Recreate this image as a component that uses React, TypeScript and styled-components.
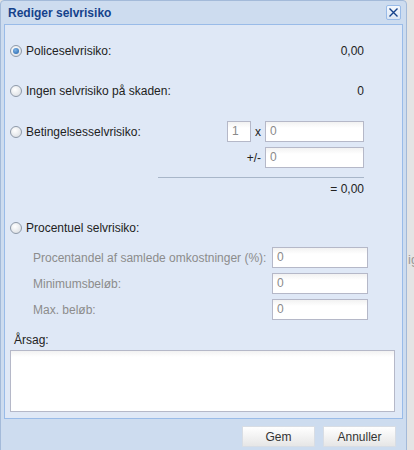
import React from "react";
import styled, { createGlobalStyle } from "styled-components";

const Global = createGlobalStyle`
  html, body { margin: 0; padding: 0; background: #ececec; }
  * { box-sizing: border-box; }
`;

const Page = styled.div`
  width: 414px;
  height: 450px;
  overflow: hidden;
  display: flex;
  font-family: "Liberation Sans", Arial, sans-serif;
  font-size: 12px;
  color: #222;
  background: #e4e4e4;
`;

const Win = styled.div`
  width: 407px;
  height: 470px;
  flex: none;
  background: #cddcef;
  border: 1px solid #a3bad9;
  border-radius: 4px 4px 0 0;
  padding: 0 3px;
  display: flex;
  flex-direction: column;
`;

const Header = styled.div`
  height: 23px;
  display: flex;
  align-items: center;
  justify-content: space-between;
  padding: 0 2px 0 4px;
`;

const Title = styled.div`
  font-weight: bold;
  color: #15428b;
  font-size: 12px;
`;

const Close = styled.div`
  width: 15px;
  height: 15px;
  border: 1px solid #99bbe8;
  border-radius: 2px;
  background: linear-gradient(#f4f8fd, #dbe6f4);
  display: flex;
  align-items: center;
  justify-content: center;
`;

const Body = styled.div`
  background: #dfe8f6;
  border: 1px solid #99bbe8;
  height: 395px;
  padding: 0 7px 0 5px;
  display: flex;
  flex-direction: column;
`;

const Row = styled.div<{ $top: number; $h?: number }>`
  margin-top: ${(p) => p.$top}px;
  height: ${(p) => p.$h ?? 20}px;
  display: flex;
  align-items: center;
`;

const RadioLabel = styled.label`
  display: flex;
  align-items: center;
  gap: 4px;
  flex: 1;
`;

const Radio = styled.span<{ $on?: boolean }>`
  width: 12px;
  height: 12px;
  border-radius: 50%;
  border: 1px solid #8e99a8;
  background: radial-gradient(circle at 40% 35%, #ffffff, #d5d9de);
  display: flex;
  align-items: center;
  justify-content: center;
  &::after {
    content: "";
    display: ${(p) => (p.$on ? "block" : "none")};
    width: 6px;
    height: 6px;
    border-radius: 50%;
    background: radial-gradient(circle at 40% 35%, #7db3e6, #1f5fa8);
  }
`;

const Value = styled.div`
  width: 80px;
  text-align: right;
  margin-right: 31px;
`;

const Field = styled.div<{ $w: number }>`
  width: ${(p) => p.$w}px;
  height: 21px;
  border: 1px solid #b5b8c8;
  background: linear-gradient(#f2f2f2, #ffffff 6px);
  color: #8a8a8a;
  padding: 2px 0 0 4px;
  line-height: 15px;
`;

const Op = styled.span`
  padding: 0 4px 0 4px;
`;

const RightGroup = styled.div`
  display: flex;
  align-items: center;
  margin-right: 31px;
`;

const Spacer = styled.div`
  flex: 1;
`;

const Sep = styled.div`
  margin-top: 9px;
  margin-left: 148px;
  margin-right: 31px;
  height: 1px;
  background: #a8b6c9;
`;

const Indent = styled.div`
  flex: 1;
  padding-left: 23px;
  color: #8c8c8c;
`;

const SubField = styled.div`
  margin-right: 27px;
`;

const Caption = styled.div`
  margin-top: 13px;
  height: 14px;
  line-height: 14px;
  padding-left: 4px;
`;

const TextArea = styled.div`
  margin-top: 3px;
  height: 62px;
  border: 1px solid #b5b8c8;
  background: linear-gradient(#f2f2f2, #ffffff 6px);
`;

const Footer = styled.div`
  display: flex;
  justify-content: flex-end;
  gap: 8px;
  padding: 7px 7px 0 0;
`;

const Btn = styled.div`
  width: 73px;
  height: 21px;
  background: linear-gradient(#ffffff, #e6e6e6);
  border: 1px solid #d8dde4;
  display: flex;
  align-items: center;
  justify-content: center;
  color: #333;
`;

const Behind = styled.div`
  flex: 1;
  padding-top: 252px;
  color: #999;
  font-size: 13px;
  overflow: hidden;
  white-space: nowrap;
  padding-left: 1px;
`;

export default function App() {
  return (
    <>
      <Global />
      <Page>
        <Win>
          <Header>
            <Title>Rediger selvrisiko</Title>
            <Close>
              <svg width="11" height="11" viewBox="0 0 11 11">
                <path d="M1.5 1.5 L9.5 9.5 M9.5 1.5 L1.5 9.5" stroke="#15428b" strokeWidth="1.4" />
              </svg>
            </Close>
          </Header>
          <Body>
            <Row $top={16}>
              <RadioLabel>
                <Radio $on />
                Policeselvrisiko:
              </RadioLabel>
              <Value>0,00</Value>
            </Row>
            <Row $top={20}>
              <RadioLabel>
                <Radio />
                Ingen selvrisiko på skaden:
              </RadioLabel>
              <Value>0</Value>
            </Row>
            <Row $top={20} $h={21}>
              <RadioLabel>
                <Radio />
                Betingelsesselvrisiko:
              </RadioLabel>
              <RightGroup>
                <Field $w={24}>1</Field>
                <Op>x</Op>
                <Field $w={99}>0</Field>
              </RightGroup>
            </Row>
            <Row $top={5} $h={21}>
              <Spacer />
              <RightGroup>
                <Op>+/-</Op>
                <Field $w={99}>0</Field>
              </RightGroup>
            </Row>
            <Sep />
            <Row $top={4} $h={14}>
              <Spacer />
              <Value>= 0,00</Value>
            </Row>
            <Row $top={22}>
              <RadioLabel>
                <Radio />
                Procentuel selvrisiko:
              </RadioLabel>
            </Row>
            <Row $top={9} $h={21}>
              <Indent>Procentandel af samlede omkostninger (%):</Indent>
              <SubField>
                <Field $w={96}>0</Field>
              </SubField>
            </Row>
            <Row $top={5} $h={21}>
              <Indent>Minimumsbeløb:</Indent>
              <SubField>
                <Field $w={96}>0</Field>
              </SubField>
            </Row>
            <Row $top={5} $h={21}>
              <Indent>Max. beløb:</Indent>
              <SubField>
                <Field $w={96}>0</Field>
              </SubField>
            </Row>
            <Caption>Årsag:</Caption>
            <TextArea />
          </Body>
          <Footer>
            <Btn>Gem</Btn>
            <Btn>Annuller</Btn>
          </Footer>
        </Win>
        <Behind>ig</Behind>
      </Page>
    </>
  );
}
